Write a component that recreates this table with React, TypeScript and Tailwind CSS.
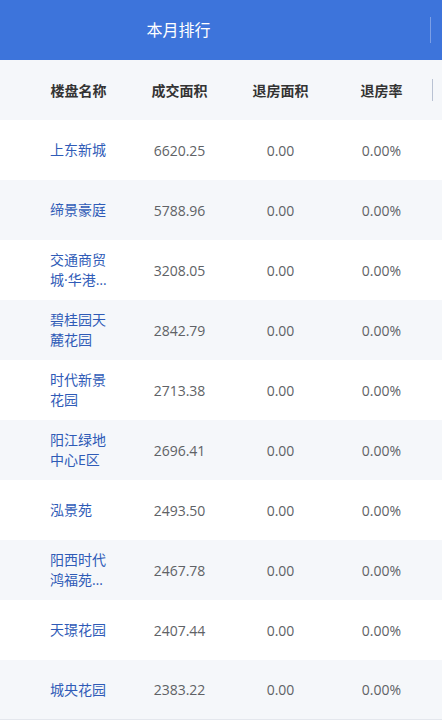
import React from 'react';

const rows = [
    { name: '上东新城', deal: '6620.25' },
    { name: '缔景豪庭', deal: '5788.96' },
    { name: '交通商贸城·华港国际', deal: '3208.05' },
    { name: '碧桂园天麓花园', deal: '2842.79' },
    { name: '时代新景花园', deal: '2713.38' },
    { name: '阳江绿地中心E区', deal: '2696.41' },
    { name: '泓景苑', deal: '2493.50' },
    { name: '阳西时代鸿福苑二期', deal: '2467.78' },
    { name: '天璟花园', deal: '2407.44' },
    { name: '城央花园', deal: '2383.22' },
];

const font = { fontFamily: '"Open Sans", "Noto Sans CJK SC", sans-serif' };

export default function App() {
    return (
        <div className="w-[442px] h-[721px] overflow-hidden bg-white" style={font}>
            {/* top bar */}
            <div className="h-[60px] bg-[#3d74db] flex items-center">
                <div className="w-[128px] shrink-0" />
                <div className="w-[101px] text-center text-white text-[16px]">本月排行</div>
                <div className="flex-1" />
                <div className="w-px h-[26px] bg-[#7c9fe6] mr-[11px]" />
            </div>

            {/* column header */}
            <div className="h-[60px] bg-[#f5f7fa] flex items-center text-[14px] font-bold text-[#333]">
                <div className="w-[28px] shrink-0" />
                <div className="w-[101px] text-center">楼盘名称</div>
                <div className="w-[101px] text-center">成交面积</div>
                <div className="w-[101px] text-center">退房面积</div>
                <div className="w-[101px] text-center">退房率</div>
                <div className="w-px h-[22px] bg-[#b9c2d3]" />
            </div>

            {rows.map((r, i) => (
                <div
                    key={r.name}
                    className={`h-[60px] flex items-center text-[14px] ${i % 2 === 1 ? 'bg-[#f5f7fa]' : 'bg-white'} ${i === rows.length - 1 ? 'border-b border-[#e4e7ed]' : ''}`}
                >
                    <div className="w-[28px] shrink-0" />
                    <div className="w-[101px] flex justify-center">
                        <div className="w-[57px] text-[#2f5bb7] leading-[20px] line-clamp-2 break-all">{r.name}</div>
                    </div>
                    <div className="w-[101px] text-center text-[#606266]">{r.deal}</div>
                    <div className="w-[101px] text-center text-[#606266]">0.00</div>
                    <div className="w-[101px] text-center text-[#606266]">0.00%</div>
                </div>
            ))}
        </div>
    );
}
